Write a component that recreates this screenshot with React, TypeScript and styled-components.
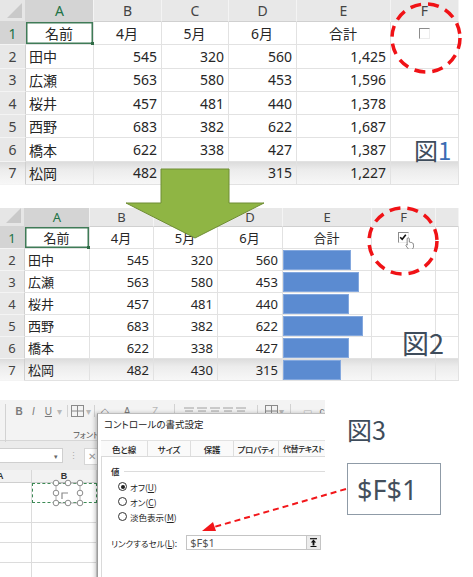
import React from "react";
import styled, { createGlobalStyle, css } from "styled-components";

const GlobalStyle = createGlobalStyle`
  html, body {
    margin: 0;
    padding: 0;
    background: #fff;
  }
  body {
    font-family: "Noto Sans", "Noto Sans CJK JP", sans-serif;
  }
`;

const Page = styled.div`
  position: relative;
  width: 473px;
  height: 577px;
  overflow: hidden;
  background: #fff;
`;

/* ---------- spreadsheet grids (fig 1 / fig 2) ---------- */

const Sheet = styled.div<{ $cols: string; $rows: string; $font: number; $top?: number }>`
  display: grid;
  grid-template-columns: ${(p) => p.$cols};
  grid-template-rows: ${(p) => p.$rows};
  width: fit-content;
  margin-top: ${(p) => p.$top ?? 0}px;
  font-size: ${(p) => p.$font}px;
  color: #262626;
`;

const shade = css`
  background: linear-gradient(180deg, #dcdcdc 0%, #ececec 35%, #f7f7f7 100%);
`;

const Corner = styled.div`
  position: relative;
  background: #e6e6e6;
  border-right: 1px solid #d4d4d4;
  border-bottom: 1px solid #d4d4d4;
  &::after {
    content: "";
    position: absolute;
    right: 3px;
    bottom: 3px;
    border-left: 15px solid transparent;
    border-bottom: 15px solid #c9c9c9;
  }
`;

const ColHead = styled.div<{ $active?: boolean }>`
  display: flex;
  align-items: center;
  justify-content: center;
  background: ${(p) => (p.$active ? "#d4d4d4" : "#e8e8e8")};
  color: ${(p) => (p.$active ? "#217346" : "#444")};
  border-right: 1px solid #f4f4f4;
  border-bottom: 1px solid #d0d0d0;
`;

const RowHead = styled.div<{ $active?: boolean; $shade?: boolean }>`
  display: flex;
  align-items: center;
  justify-content: center;
  background: ${(p) => (p.$active ? "#d4d4d4" : "#e8e8e8")};
  color: ${(p) => (p.$active ? "#217346" : "#444")};
  border-right: 1px solid #d0d0d0;
  border-bottom: 1px solid #f4f4f4;
  ${(p) => p.$shade && shade}
`;

const Cell = styled.div<{
  $align?: "left" | "right" | "center";
  $selected?: boolean;
  $shade?: boolean;
  $bar?: boolean;
}>`
  position: relative;
  display: flex;
  align-items: ${(p) => (p.$bar ? "stretch" : "center")};
  justify-content: ${(p) =>
    p.$align === "right" ? "flex-end" : p.$align === "center" ? "center" : "flex-start"};
  padding: ${(p) => (p.$bar ? "1px 0 0 0" : "0 4px 0 3px")};
  border-right: 1px solid #e2e2e2;
  border-bottom: 1px solid #e2e2e2;
  white-space: nowrap;
  background: #fff;
  ${(p) => p.$shade && shade}
  ${(p) =>
    p.$selected &&
    css`
      box-shadow: inset 0 0 0 1.5px #3f7b57;
      &::after {
        content: "";
        position: absolute;
        right: -2px;
        bottom: -2px;
        width: 4px;
        height: 4px;
        background: #2f6b45;
      }
    `}
`;

const Bar = styled.div`
  background: #5b8bd1;
  box-shadow: inset 0 0 0 1px #84a8de;
`;

const CheckBox = styled.span`
  position: relative;
  display: inline-block;
  width: 9px;
  height: 9px;
  background: #fff;
  border-top: 1.5px solid #8c8c8c;
  border-left: 1.5px solid #8c8c8c;
  border-right: 1px solid #ececec;
  border-bottom: 1px solid #ececec;
  svg {
    position: absolute;
    left: 0;
    top: 0;
  }
`;

const Cursor = styled.svg`
  position: absolute;
  left: 33px;
  top: 10px;
`;

/* ---------- fig 3 ---------- */

const Fig3 = styled.div`
  display: flex;
  margin-top: 19px;
  height: 177px;
`;

const Shot = styled.div`
  position: relative;
  width: 325px;
  height: 100%;
  overflow: hidden;
  background: #fff;
  font-family: "Noto Sans CJK JP", sans-serif;
  font-feature-settings: "palt";
`;

const Ribbon = styled.div`
  position: relative;
  height: 41px;
  background: #f3f3f3;
  border-bottom: 1px solid #d6d6d6;
  box-sizing: border-box;
`;

const RibbonRow = styled.div`
  display: flex;
  align-items: center;
  height: 14px;
  padding-top: 4px;
`;

const RibbonItem = styled.span<{ $ml: number; $w: number; $faded?: boolean }>`
  display: flex;
  align-items: center;
  justify-content: center;
  margin-left: ${(p) => p.$ml}px;
  width: ${(p) => p.$w}px;
  font-family: "Liberation Sans", sans-serif;
  font-size: 10px;
  color: ${(p) => (p.$faded ? "#b8b8b8" : "#7a7a7a")};
`;

const RibbonSep = styled.span<{ $ml: number; $tall?: boolean }>`
  margin-left: ${(p) => p.$ml}px;
  width: 1px;
  height: ${(p) => (p.$tall ? 38 : 12)}px;
  align-self: ${(p) => (p.$tall ? "flex-start" : "center")};
  background: #d2d2d2;
`;

const GroupName = styled.span`
  position: absolute;
  left: 73px;
  top: 29px;
  font-size: 8px;
  color: #555;
`;

const FormulaBand = styled.div`
  display: flex;
  align-items: flex-start;
  height: 29px;
  padding-top: 7px;
  box-sizing: border-box;
  background: #ebebeb;
`;

const NameBox = styled.div`
  display: flex;
  align-items: center;
  justify-content: flex-end;
  width: 63px;
  height: 15px;
  padding-right: 4px;
  box-sizing: border-box;
  background: #fff;
  border: 1px solid #cfcfcf;
  border-left: none;
  font-size: 7px;
  color: #666;
`;

const BandDots = styled.span`
  width: 21px;
  text-align: center;
  font-size: 9px;
  line-height: 15px;
  color: #aaa;
`;

const FormulaBox = styled.div`
  width: 40px;
  height: 15px;
  padding-left: 3px;
  background: #fff;
  border: 1px solid #d6d6d6;
  font-family: "Liberation Sans", sans-serif;
  font-size: 10px;
  line-height: 15px;
  color: #999;
`;

const Workbook = styled.div`
  display: grid;
  grid-template-columns: 32px 65px 1fr;
  grid-template-rows: 13px repeat(5, 20px);
`;

const WbHead = styled.div<{ $edge?: boolean }>`
  display: flex;
  align-items: center;
  justify-content: ${(p) => (p.$edge ? "flex-start" : "center")};
  background: #f2f2f2;
  border-right: 1px solid #d8d8d8;
  border-bottom: 1px solid #cfcfcf;
  font-family: "Liberation Sans", sans-serif;
  font-weight: bold;
  font-size: 9px;
  color: #333;
`;

const EdgeLetter = styled.span`
  margin-left: -3px;
`;

const WbCell = styled.div<{ $picked?: boolean }>`
  position: relative;
  border-right: 1px solid #dcdcdc;
  border-bottom: 1px solid #dcdcdc;
  ${(p) =>
    p.$picked &&
    css`
      border: 1px dashed #3c8a55;
      z-index: 1;
    `}
  svg {
    position: absolute;
    left: 0;
    top: 0;
    overflow: visible;
  }
`;

const Dialog = styled.div`
  position: absolute;
  left: 97px;
  top: 13px;
  width: 250px;
  height: 180px;
  background: #fff;
  border-left: 1px solid #9c9c9c;
  border-top: 1px solid #bdbdbd;
  box-shadow: -2px 0 4px rgba(0, 0, 0, 0.22);
  z-index: 2;
  color: #222;
`;

const DialogTitle = styled.div`
  height: 26px;
  padding: 5px 0 0 6px;
  box-sizing: border-box;
  font-size: 9.5px;
  line-height: 11px;
`;

const TabStrip = styled.div`
  display: flex;
  margin-left: 3px;
  height: 15px;
  background: #fafafa;
  border-top: 1px solid #e2e2e2;
`;

const Tab = styled.span<{ $w: number; $start?: boolean }>`
  display: flex;
  align-items: center;
  justify-content: ${(p) => (p.$start ? "flex-start" : "center")};
  padding-left: ${(p) => (p.$start ? 4 : 0)}px;
  flex: none;
  width: ${(p) => p.$w}px;
  box-sizing: border-box;
  border-right: 1px solid #dedede;
  font-size: ${(p) => (p.$start ? 8 : 8.5)}px;
  font-weight: 500;
  letter-spacing: ${(p) => (p.$start ? -0.5 : -0.2)}px;
  white-space: nowrap;
`;

const Panel = styled.div`
  margin-left: 3px;
  height: 140px;
  padding: 8px 0 0 9px;
  border-left: 1px solid #dadada;
  border-top: 1px solid #dadada;
  box-sizing: border-box;
  font-size: 8.5px;
`;

const GroupLegend = styled.div`
  display: flex;
  align-items: center;
  gap: 4px;
  height: 12px;
  font-weight: 500;
  &::after {
    content: "";
    flex: 1;
    height: 1px;
    background: #dcdcdc;
  }
`;

const RadioList = styled.div`
  display: flex;
  flex-direction: column;
  padding: 2px 0 0 7px;
`;

const RadioRow = styled.label`
  display: flex;
  align-items: center;
  gap: 3px;
  height: 15px;
`;

const Radio = styled.span<{ $on?: boolean }>`
  display: inline-flex;
  align-items: center;
  justify-content: center;
  width: 7px;
  height: 7px;
  border: 1px solid #333;
  border-radius: 50%;
  background: #fff;
  &::after {
    content: "";
    width: 4px;
    height: 4px;
    border-radius: 50%;
    background: ${(p) => (p.$on ? "#1e1e1e" : "transparent")};
  }
`;

const LinkRow = styled.div`
  display: flex;
  align-items: center;
  gap: 9px;
  margin-top: 11px;
  height: 15px;
`;

const LinkInput = styled.div`
  display: flex;
  align-items: center;
  justify-content: space-between;
  width: 135px;
  height: 15px;
  padding-left: 3px;
  box-sizing: border-box;
  border: 1px solid #c4c4c4;
  font-family: "Noto Sans", sans-serif;
  font-size: 11px;
  color: #555;
`;

const PickButton = styled.span`
  display: flex;
  align-items: center;
  justify-content: center;
  width: 13px;
  height: 13px;
  background: #ececec;
  border-left: 1px solid #c8c8c8;
`;

const Side = styled.div`
  display: flex;
  flex-direction: column;
  padding: 15px 0 0 22px;
`;

const FigLabel = styled.div<{ $size: number }>`
  font-family: "Noto Sans CJK JP", sans-serif;
  font-size: ${(p) => p.$size}px;
  line-height: 28px;
  color: #3e4c5b;
  white-space: nowrap;
  span {
    color: #3b6cb3;
  }
`;

const FloatLabel = styled(FigLabel)<{ $x: number; $y: number }>`
  position: absolute;
  left: ${(p) => p.$x}px;
  top: ${(p) => p.$y}px;
  z-index: 3;
`;

const Callout = styled.div`
  display: flex;
  align-items: center;
  width: 94px;
  height: 52px;
  margin-top: 20px;
  padding-left: 9px;
  box-sizing: border-box;
  border: 1.5px solid #8f9ba7;
  background: #fff;
  font-family: "Noto Sans", sans-serif;
  font-size: 27px;
  color: #434f5c;
`;

const Overlay = styled.svg`
  position: absolute;
  left: 0;
  top: 0;
  pointer-events: none;
  z-index: 4;
`;

/* ---------- data ---------- */

const names = ["田中", "広瀬", "桜井", "西野", "橋本", "松岡"];
const scores = [
  [545, 320, 560],
  [563, 580, 453],
  [457, 481, 440],
  [683, 382, 622],
  [622, 338, 427],
  [482, 430, 315],
];
const total = (r: number[]) => r.reduce((a, b) => a + b, 0);
const fmt = (n: number) => n.toLocaleString("en-US");
const months = ["4月", "5月", "6月"];

function Check() {
  return (
    <svg width="8" height="8" viewBox="0 0 8 8">
      <path d="M1.2 4.2 L3.2 6.2 L6.8 1.8" fill="none" stroke="#111" strokeWidth="1.6" />
    </svg>
  );
}

function HandCursor() {
  return (
    <Cursor width="10" height="13" viewBox="0 0 14 18">
      <path
        d="M4.5 1c.9 0 1.5.6 1.5 1.5V7c.7-.4 1.6-.1 1.9.6.7-.4 1.6-.1 1.9.7.7-.3 1.6.1 1.7.9l.5 3c.2 1.6-.3 3.1-1.3 4.3L10 17H5L1.6 12.5c-.4-.6-.3-1.4.3-1.8.6-.4 1.3-.2 1.7.3l-.6-.8V2.5C3 1.6 3.6 1 4.5 1z"
        fill="#fff"
        stroke="#5a5a5a"
        strokeWidth="1"
      />
    </Cursor>
  );
}

function SheetOne() {
  const last = scores.length - 1;
  return (
    <Sheet $cols="26px 68px 68px 67px 68px 94px 68px" $rows="22px repeat(7, 23.3px)" $font={14}>
      <Corner />
      {["A", "B", "C", "D", "E", "F"].map((c) => (
        <ColHead key={c} $active={c === "A"}>
          {c}
        </ColHead>
      ))}
      <RowHead $active>1</RowHead>
      <Cell $align="center" $selected>
        名前
      </Cell>
      {months.map((m) => (
        <Cell key={m} $align="center">
          {m}
        </Cell>
      ))}
      <Cell $align="center">合計</Cell>
      <Cell $align="center">
        <CheckBox />
      </Cell>
      {scores.map((r, i) => (
        <React.Fragment key={names[i]}>
          <RowHead $shade={i === last}>{i + 2}</RowHead>
          <Cell $shade={i === last}>{names[i]}</Cell>
          {r.map((v, j) => (
            <Cell key={j} $align="right" $shade={i === last}>
              {/* the arrow covers C7 in the picture */}
              {i === last && j === 1 ? null : v}
            </Cell>
          ))}
          <Cell $align="right" $shade={i === last}>
            {fmt(total(r))}
          </Cell>
          <Cell $shade={i === last} />
        </React.Fragment>
      ))}
    </Sheet>
  );
}

function SheetTwo() {
  const last = scores.length - 1;
  return (
    <Sheet
      $cols="25px 65px 64px 64px 65px 89px 64px 23px"
      $rows="19px repeat(7, 22px)"
      $font={13}
      $top={23}
    >
      <Corner />
      {["A", "B", "C", "D", "E", "F", ""].map((c) => (
        <ColHead key={c || "g"} $active={c === "A"}>
          {c}
        </ColHead>
      ))}
      <RowHead $active>1</RowHead>
      <Cell $align="center" $selected>
        名前
      </Cell>
      {months.map((m) => (
        <Cell key={m} $align="center">
          {m}
        </Cell>
      ))}
      <Cell $align="center">合計</Cell>
      <Cell $align="center">
        <CheckBox>
          <Check />
        </CheckBox>
        <HandCursor />
      </Cell>
      <Cell />
      {scores.map((r, i) => (
        <React.Fragment key={names[i]}>
          <RowHead $shade={i === last}>{i + 2}</RowHead>
          <Cell $shade={i === last}>{names[i]}</Cell>
          {r.map((v, j) => (
            <Cell key={j} $align="right" $shade={i === last}>
              {v}
            </Cell>
          ))}
          <Cell $bar $shade={i === last}>
            <Bar style={{ width: `${total(r) / 21}px` }} />
          </Cell>
          <Cell $shade={i === last} />
          <Cell $shade={i === last} />
        </React.Fragment>
      ))}
    </Sheet>
  );
}

function GridIcon() {
  return (
    <svg width="13" height="12" viewBox="0 0 13 12">
      <rect x="0.5" y="0.5" width="12" height="11" fill="none" stroke="#8a8a8a" />
      <path d="M6.5 0.5V11.5M0.5 6H12.5" stroke="#8a8a8a" />
    </svg>
  );
}

function AlignIcon() {
  return (
    <svg width="10" height="8" viewBox="0 0 10 8">
      <path d="M0 1H10M1 4H9M0 7H10" stroke="#a0a0a0" strokeWidth="1" />
    </svg>
  );
}

function UploadIcon() {
  return (
    <svg width="7" height="9" viewBox="0 0 7 9">
      <path d="M0 0.7H7" stroke="#111" strokeWidth="1.2" />
      <path d="M3.5 1.6L6.2 4.6H4.4V7.4H2.6V4.6H0.8Z" fill="#111" />
      <path d="M0.5 8.5H6.5" stroke="#111" strokeWidth="1" />
    </svg>
  );
}

function FigThree() {
  return (
    <Fig3>
      <Shot>
        <Ribbon>
          <RibbonRow>
            <RibbonSep $ml={5} $tall />
            <RibbonItem $ml={10} $w={6}>
              <b>B</b>
            </RibbonItem>
            <RibbonItem $ml={9} $w={5}>
              <i>I</i>
            </RibbonItem>
            <RibbonItem $ml={9} $w={7}>
              <u>U</u>
            </RibbonItem>
            <RibbonItem $ml={5} $w={5} $faded>
              ▾
            </RibbonItem>
            <RibbonSep $ml={5} />
            <RibbonItem $ml={3} $w={14}>
              <GridIcon />
            </RibbonItem>
            <RibbonItem $ml={1} $w={5} $faded>
              ▾
            </RibbonItem>
            <RibbonSep $ml={3} />
            <RibbonItem $ml={5} $w={11}>
              ◇
            </RibbonItem>
            <RibbonItem $ml={12} $w={9}>
              A
            </RibbonItem>
            <RibbonItem $ml={20} $w={7} $faded>
              Z
            </RibbonItem>
            <RibbonSep $ml={16} $tall />
            {[0, 1, 2, 3, 4].map((k) => (
              <RibbonItem key={k} $ml={k === 0 ? 9 : 3} $w={10}>
                <AlignIcon />
              </RibbonItem>
            ))}
            <RibbonSep $ml={11} />
            <RibbonItem $ml={6} $w={14}>
              <GridIcon />
            </RibbonItem>
            <RibbonItem $ml={1} $w={5} $faded>
              ▾
            </RibbonItem>
            <RibbonSep $ml={6} $tall />
            <RibbonItem $ml={9} $w={14} $faded>
              ▭
            </RibbonItem>
            <RibbonItem $ml={5} $w={6}>
              c
            </RibbonItem>
          </RibbonRow>
          <GroupName>フォント</GroupName>
        </Ribbon>
        <FormulaBand>
          <NameBox>▾</NameBox>
          <BandDots>⋮</BandDots>
          <FormulaBox>✕</FormulaBox>
        </FormulaBand>
        <Workbook>
          <WbHead $edge>
            <EdgeLetter>A</EdgeLetter>
          </WbHead>
          <WbHead>B</WbHead>
          <WbHead />
          {[0, 1, 2, 3, 4].map((r) => (
            <React.Fragment key={r}>
              <WbCell />
              <WbCell $picked={r === 0}>
                {r === 0 && (
                  <svg width="63" height="18">
                    <path d="M23 -1H47M23 19H47M23 -1V19M47 -1V19" stroke="#9a9a9a" strokeWidth="0.8" />
                    <path d="M29 15V9H35" fill="none" stroke="#8a8a8a" strokeWidth="1.2" />
                    {[
                      [23, -1],
                      [35, -1],
                      [47, -1],
                      [23, 9],
                      [47, 9],
                      [23, 19],
                      [35, 19],
                      [47, 19],
                    ].map(([x, y]) => (
                      <circle key={`${x}-${y}`} cx={x} cy={y} r="2.8" fill="#fff" stroke="#8c8c8c" strokeWidth="1" />
                    ))}
                  </svg>
                )}
              </WbCell>
              <WbCell />
            </React.Fragment>
          ))}
        </Workbook>
        <Dialog>
          <DialogTitle>コントロールの書式設定</DialogTitle>
          <TabStrip>
            <Tab $w={47}>色と線</Tab>
            <Tab $w={43}>サイズ</Tab>
            <Tab $w={43}>保護</Tab>
            <Tab $w={45}>プロパティ</Tab>
            <Tab $w={60} $start>
              代替テキスト
            </Tab>
          </TabStrip>
          <Panel>
            <GroupLegend>値</GroupLegend>
            <RadioList>
              <RadioRow>
                <Radio $on />
                <span>
                  オフ(<u>U</u>)
                </span>
              </RadioRow>
              <RadioRow>
                <Radio />
                <span>
                  オン(<u>C</u>)
                </span>
              </RadioRow>
              <RadioRow>
                <Radio />
                <span>
                  淡色表示(<u>M</u>)
                </span>
              </RadioRow>
            </RadioList>
            <LinkRow>
              <span>
                リンクするセル(<u>L</u>):
              </span>
              <LinkInput>
                $F$1
                <PickButton>
                  <UploadIcon />
                </PickButton>
              </LinkInput>
            </LinkRow>
          </Panel>
        </Dialog>
      </Shot>
      <Side>
        <FigLabel $size={25}>図3</FigLabel>
        <Callout>$F$1</Callout>
      </Side>
    </Fig3>
  );
}

export default function App() {
  return (
    <Page>
      <GlobalStyle />
      <SheetOne />
      <SheetTwo />
      <FigThree />
      <FloatLabel $size={24} $x={414} $y={136}>
        図<span>1</span>
      </FloatLabel>
      <FloatLabel $size={27} $x={402} $y={329}>
        図2
      </FloatLabel>
      <Overlay width="473" height="577" viewBox="0 0 473 577">
        <polygon
          points="161,169 229,169 229,203 264,203 195,238 126,203 161,203"
          fill="#8fb544"
          stroke="#6f8d35"
          strokeWidth="1"
        />
        <ellipse cx="426" cy="38" rx="34" ry="34" fill="none" stroke="#f01216" strokeWidth="3.5" strokeDasharray="11 7" />
        <ellipse cx="403" cy="241" rx="34" ry="33" fill="none" stroke="#f01216" strokeWidth="3.5" strokeDasharray="11 7" />
        <line x1="346" y1="489" x2="214" y2="527" stroke="#f2161a" strokeWidth="2" strokeDasharray="6 4" />
        <polygon points="202,531 213,522 216,531" fill="#f2161a" />
      </Overlay>
    </Page>
  );
}
